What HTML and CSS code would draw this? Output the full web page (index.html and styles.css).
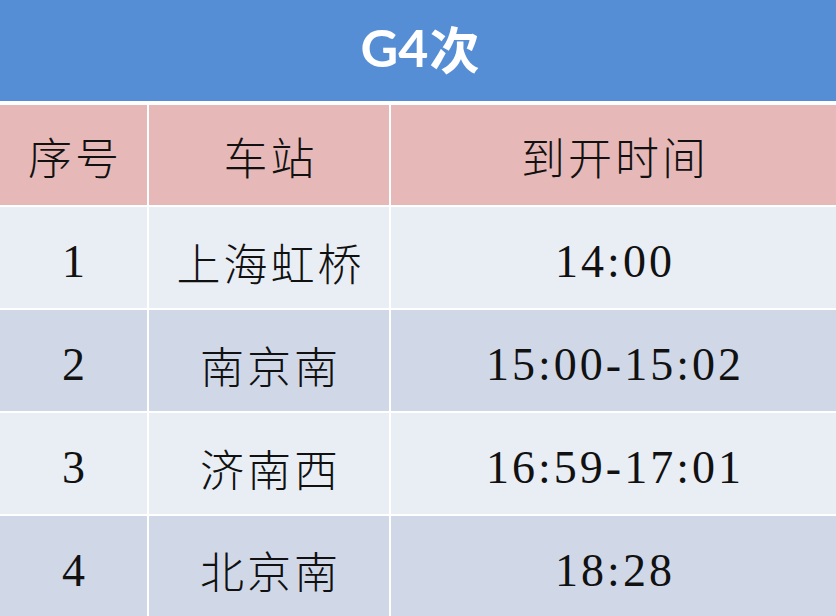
FILE: index.html
```html
<!DOCTYPE html>
<html lang="zh">
<head>
<meta charset="utf-8">
<title>G4次</title>
<link rel="stylesheet" href="styles.css">
</head>
<body>
<div class="timetable">
  <div class="title">G4<span class="cjk-bold">次</span></div>
  <div class="cell head">序号</div>
  <div class="cell head">车站</div>
  <div class="cell head">到开时间</div>

  <div class="cell light num">1</div>
  <div class="cell light">上海虹桥</div>
  <div class="cell light num">14:00</div>

  <div class="cell dark num">2</div>
  <div class="cell dark">南京南</div>
  <div class="cell dark num">15:00-15:02</div>

  <div class="cell light num">3</div>
  <div class="cell light">济南西</div>
  <div class="cell light num">16:59-17:01</div>

  <div class="cell dark num">4</div>
  <div class="cell dark">北京南</div>
  <div class="cell dark num">18:28</div>
</div>
</body>
</html>
```
FILE: styles.css
```css
html, body {
  margin: 0;
  padding: 0;
  background: #ffffff;
}

.timetable {
  width: 836px;
  height: 616px;
  display: grid;
  grid-template-columns: 147px 240px 1fr;
  grid-template-rows: 103px 100px 101px 101px 101px 100px;
  column-gap: 2px;
  row-gap: 2px;
  background: #ffffff;
  overflow: hidden;
}

.title {
  grid-column: 1 / 4;
  margin-bottom: 2px;
  background: #558ed5;
  color: #ffffff;
  display: flex;
  align-items: center;
  justify-content: center;
  font-family: Lato, "Noto Sans CJK SC", sans-serif;
  font-weight: 700;
  font-size: 52px;
  padding-left: 4px;
  padding-bottom: 8px;
  box-sizing: border-box;
}

.title .cjk-bold {
  font-family: "Noto Sans CJK SC", sans-serif;
  font-weight: 700;
  font-size: 50px;
  margin-left: 1px;
}

.cell {
  display: flex;
  align-items: center;
  justify-content: center;
  color: #111111;
  font-family: "Liberation Serif", "Noto Sans CJK SC", serif;
  font-size: 44px;
  letter-spacing: 3px;
  padding-left: 3px;
  padding-top: 8px;
  box-sizing: border-box;
  font-weight: 300;
}

.head {
  background: #e6b9b8;
  padding-top: 2px;
}

.light {
  background: #e9edf4;
}

.dark {
  background: #d0d8e8;
}

.num {
  font-family: "Liberation Serif", serif;
  font-size: 46px;
  font-weight: 400;
  letter-spacing: 3px;
}
```
